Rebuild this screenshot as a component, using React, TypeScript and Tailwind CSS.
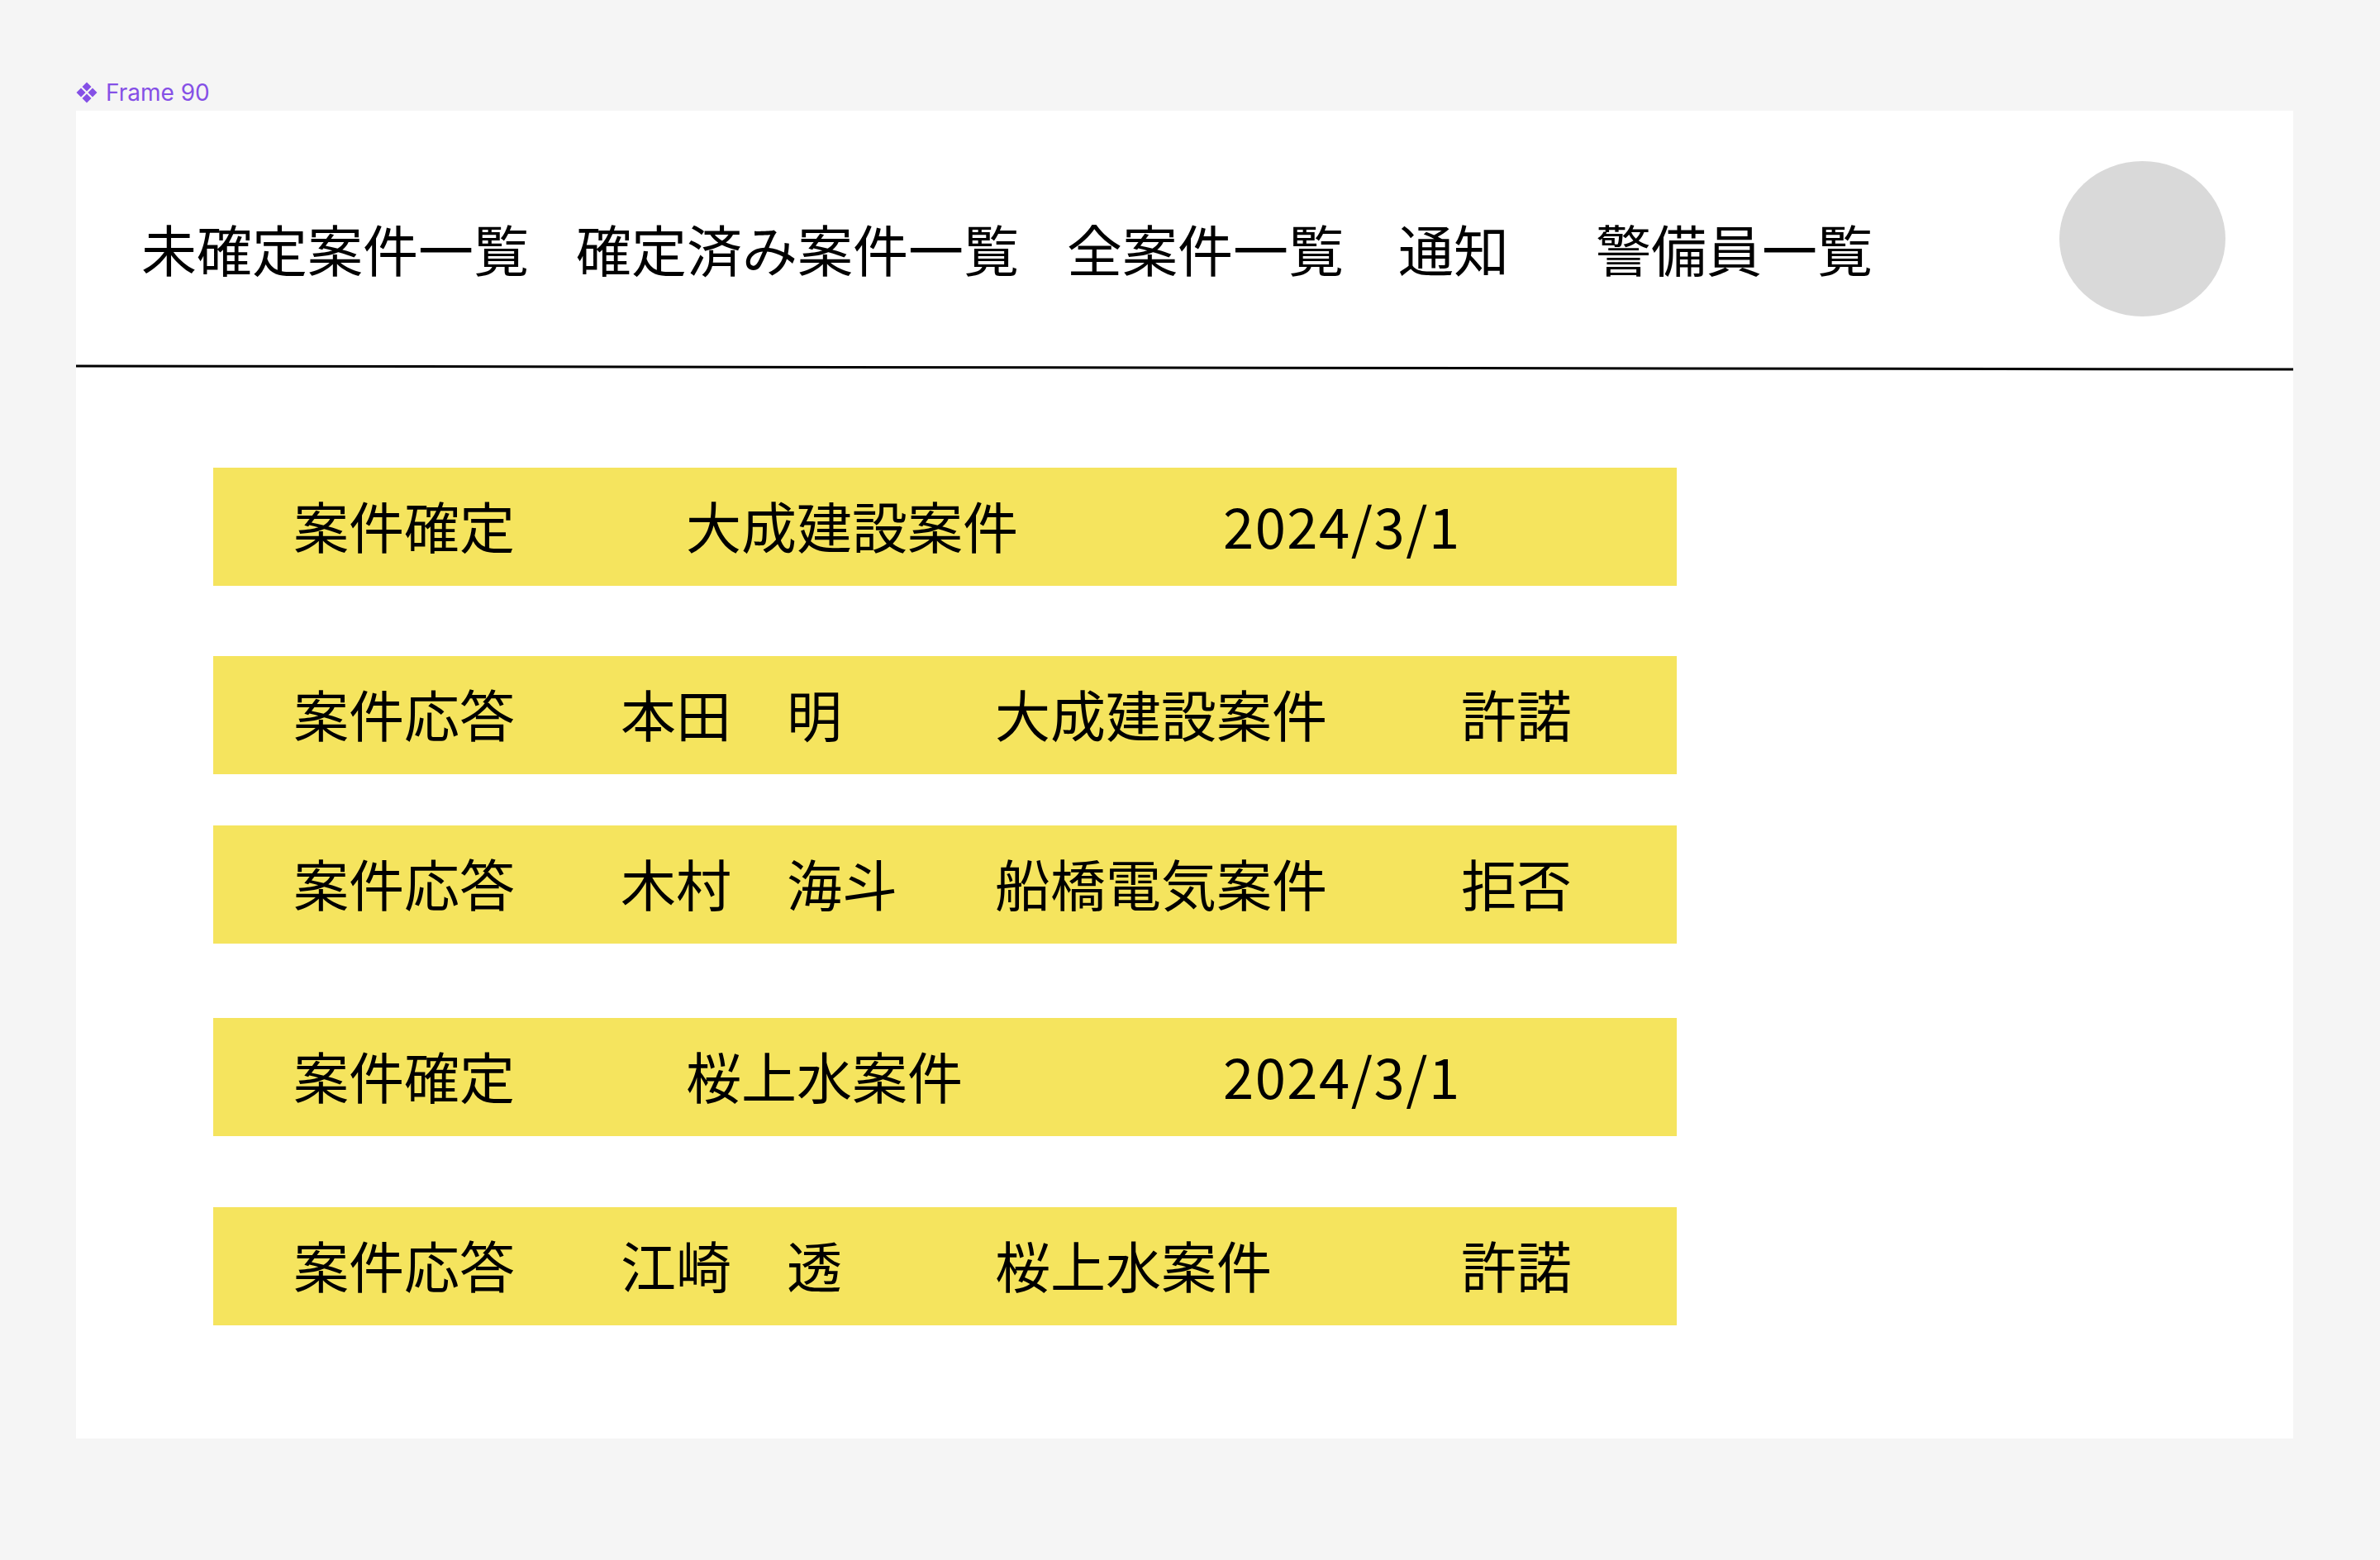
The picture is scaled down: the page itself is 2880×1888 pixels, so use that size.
import React from 'react'

type Row =
  | { kind: 'confirm'; title: string; date: string }
  | { kind: 'reply'; name: string; title: string; result: string }

const rows: { row: Row; mt: string }[] = [
  { row: { kind: 'confirm', title: '大成建設案件', date: '2024/3/1' }, mt: 'mt-[116px]' },
  { row: { kind: 'reply', name: '本田　明', title: '大成建設案件', result: '許諾' }, mt: 'mt-[85px]' },
  { row: { kind: 'reply', name: '木村　海斗', title: '船橋電気案件', result: '拒否' }, mt: 'mt-[62px]' },
  { row: { kind: 'confirm', title: '桜上水案件', date: '2024/3/1' }, mt: 'mt-[90px]' },
  { row: { kind: 'reply', name: '江崎　透', title: '桜上水案件', result: '許諾' }, mt: 'mt-[86px]' },
]

const jp = "font-['Noto_Sans_CJK_JP','Noto_Sans',sans-serif]"

function ComponentIcon() {
  return (
    <svg width="26" height="26" viewBox="0 0 26 26" fill="#8550e6">
      <path d="M13 0.5 L18.5 6 L13 11.5 L7.5 6 Z" />
      <path d="M13 14.5 L18.5 20 L13 25.5 L7.5 20 Z" />
      <path d="M6 7.5 L11.5 13 L6 18.5 L0.5 13 Z" />
      <path d="M20 7.5 L25.5 13 L20 18.5 L14.5 13 Z" />
    </svg>
  )
}

function Notice({ row, mt }: { row: Row; mt: string }) {
  return (
    <div className={`${mt} flex h-[143px] w-[1771px] items-center bg-[#f5e45e] pb-[7px] pl-[97px] text-[67px] leading-none text-black`}>
      {row.kind === 'confirm' ? (
        <>
          <span className="w-[475px] shrink-0">案件確定</span>
          <span className="w-[650px] shrink-0">{row.title}</span>
          <span className="tracking-[1.5px]">{row.date}</span>
        </>
      ) : (
        <>
          <span className="w-[396px] shrink-0">案件応答</span>
          <span className="w-[453px] shrink-0">{row.name}</span>
          <span className="w-[564px] shrink-0">{row.title}</span>
          <span>{row.result}</span>
        </>
      )}
    </div>
  )
}

export default function App() {
  return (
    <div className={`min-h-screen bg-[#f5f5f5] pb-[147px] pl-[92px] pt-[98px] ${jp}`}>
      {/* Figma のフレーム名 */}
      <div className="flex h-[28px] items-center gap-[10px]">
        <ComponentIcon />
        <span className="font-['Inter',sans-serif] text-[28px] leading-none text-[#8550e6]">
          Frame 90
        </span>
      </div>

      <div className="mt-[8px] flex h-[1607px] w-[2683px] flex-col bg-white">
        {/* ヘッダー */}
        <div className="flex h-[306px] items-start">
          <nav className="flex pl-[79px] pt-[132px] text-[67px] leading-none text-black">
            <span className="w-[526px]">未確定案件一覧</span>
            <span className="w-[594px]">確定済み案件一覧</span>
            <span className="w-[401px]">全案件一覧</span>
            <span className="w-[239px]">通知</span>
            <span>警備員一覧</span>
          </nav>
          <div className="ml-auto mr-[82px] mt-[61px] h-[188px] w-[201px] rounded-[50%] bg-[#d9d9d9]" />
        </div>

        <svg width="2683" height="10" className="block">
          <line x1="0" y1="3" x2="2683" y2="7" stroke="#000" strokeWidth="3" />
        </svg>

        {/* 通知一覧 */}
        <div className="ml-[166px] flex flex-col">
          {rows.map((r, i) => (
            <Notice key={i} row={r.row} mt={r.mt} />
          ))}
        </div>
      </div>
    </div>
  )
}
